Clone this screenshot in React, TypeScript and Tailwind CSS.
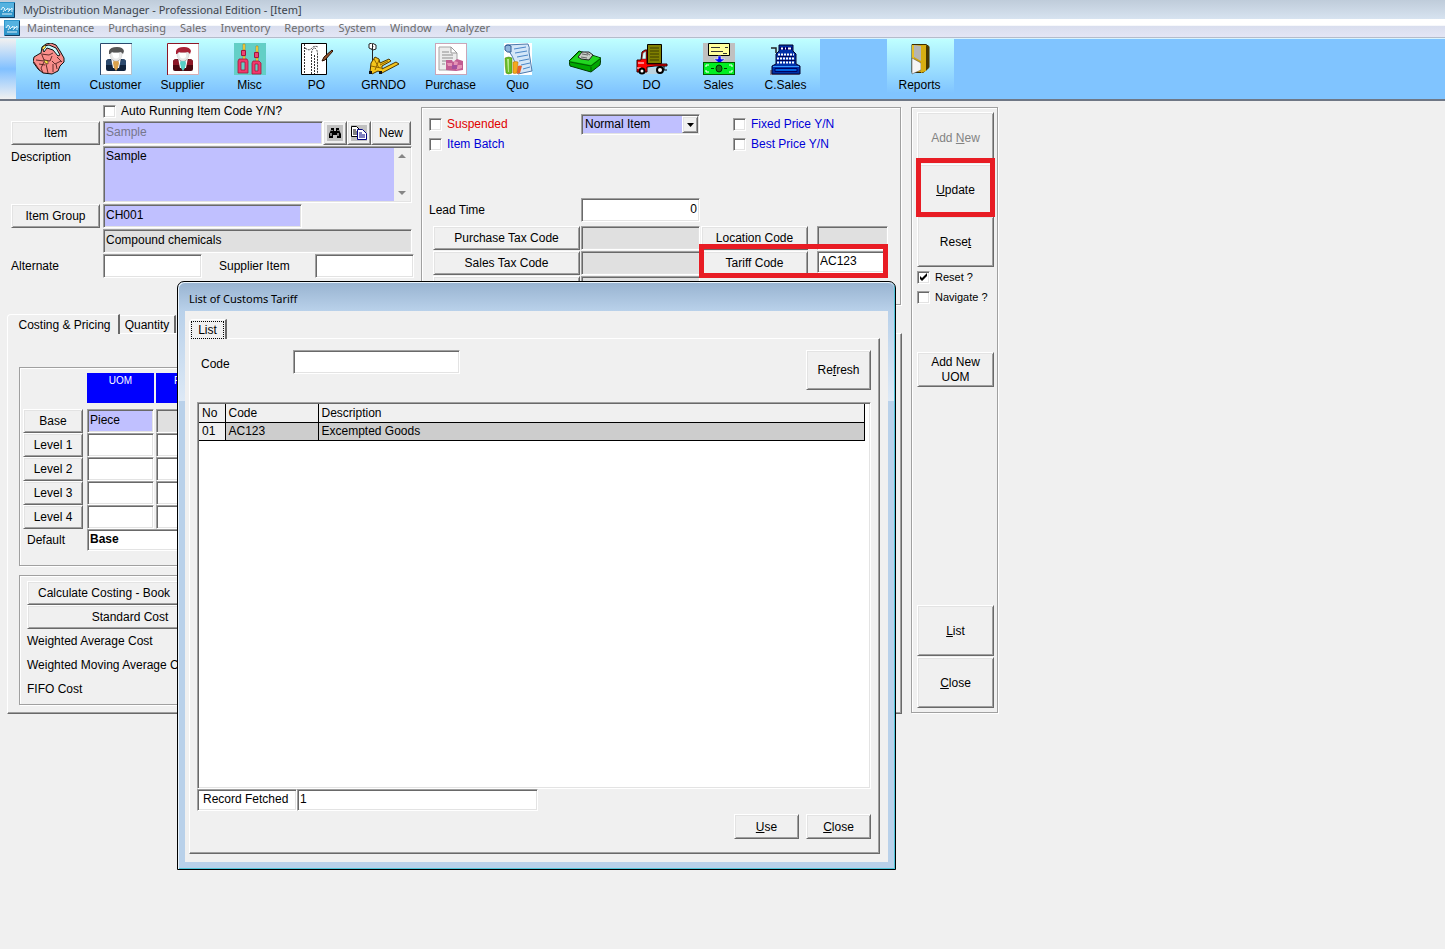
import React, { useState } from "react";

const raised =
  "border border-t-white border-l-white border-r-[#696969] border-b-[#696969] bg-[#f0f0f0] shadow-[inset_1px_1px_0_#e3e3e3,inset_-1px_-1px_0_#a0a0a0]";
const sunken =
  "border border-t-[#a0a0a0] border-l-[#a0a0a0] border-r-white border-b-white shadow-[inset_1px_1px_0_#696969,inset_-1px_-1px_0_#e3e3e3]";
const etched =
  "border border-[#a0a0a0] shadow-[1px_1px_0_#fff,inset_1px_1px_0_#fff]";
const field = `${sunken} min-w-0 px-[2px] pb-[2px] outline-none`;

const AppIcon = () => (
  <svg viewBox="0 0 16 16" className="size-4 shrink-0">
    <rect width="16" height="16" fill="#2f95ca" />
    <rect x="1" y="1" width="14" height="7" fill="#55b2e0" />
    <path d="M2 8l2-3 2 2-2 3M6 9l3-3M8 7h3l-2 3M10 9l3-3v4M3 12h10" stroke="#dff3fc" fill="none" />
    <path d="M15.5 1v14.5H1" stroke="#123a5c" fill="none" />
  </svg>
);

const BagIcon = () => (
  <>
    <path d="M8 10L9 4l4-3 5-1 5 2 4 6 4 7v4l-4 4-2 5-6 3-9-1-5-4-5-7 1-5 5-3z" fill="#f98e8b" stroke="#111" />
    <path d="M10 7l1-4 5-1 7 3 4 7-2 1-5-6-6-2-3 4z" fill="#c9fbff" stroke="#111" />
    <path d="M8 11l8 1 4-2M9 12l2 5 6 1 2-5M3 17l8 1M11 19l-3 6 2 5M19 18l3 3 6-3M13 21l2 9M20 21v8M24 14l5 5M6 21l6 1M23 21l1 5M1 19l6 9" fill="none" stroke="#3a1111" strokeWidth=".8" />
    <path d="M9 5l3-3 1 2-3 3zM11 17l4 1v3l-3-1z" fill="#ffe24a" stroke="#111" strokeWidth=".5" />
  </>
);

const Person = ({
  dark,
  mid,
  tie,
  hair,
}: {
  dark: string;
  mid: string;
  tie: string;
  hair: string;
}) => (
  <>
    <rect width="32" height="32" fill="#fff" />
    <path d="M.5 32V.5H32" fill="none" stroke={mid} />
    <path d="M31.500 1v30.500H1" fill="none" stroke={mid} strokeOpacity=".35" />
    <path d="M6 19q0-3 4-3h12q4 0 4 3v7q0 2-2 2H8q-2 0-2-2z" fill={dark} />
    <path d="M6 19q0-3 4-3l4 6H6zM26 19q0-3-4-3l-4 6h8z" fill={mid} />
    <path d="M11 15l5 6 5-6-2 10h-6z" fill="#fff" />
    <path d="M14 17h4l1 3-1 5-2 3-2-3-1-5z" fill={tie} />
    <path d="M10 9h12v3q-1 6-6 6t-6-6z" fill="#e9e9e9" stroke="#c4c4c4" strokeWidth=".5" />
    <path d="M12 10h7v4q-3 3-6 0z" fill="#fff" />
    <path d="M9 11V8q1-4 8-4 6 0 7 4l-1 3-2-2q-6 1-9 0l-2 2z" fill={hair} />
  </>
);

const CustomerIcon = () => <Person dark="#10233c" mid="#2c4a6e" tie="#d9a14c" hair="#555" />;

const SupplierIcon = () => <Person dark="#4c0810" mid="#8c1727" tie="#56cfc7" hair="#a82136" />;

const MiscIcon = () => (
  <>
    <rect width="32" height="32" fill="#63cfc6" />
    <path d="M9 1h2v6H9zM22 3h2v6h-2zM9 13h2v4H9zM22 15h2v4h-2z" fill="#ffe14a" stroke="#a66b00" strokeWidth=".5" />
    <path d="M7.500 7.500h4v5h-4zM20.500 9.500h4v5h-4z" fill="#ef4474" stroke="#9c1a3e" />
    <path d="M5 16h8l1 2v12H4V18zm2 3v8h4v-8zM19 18h6l2 2v11h-9V20zm2 3v7h3v-7z" fill="#f2386c" fillRule="evenodd" stroke="#9c1a3e" strokeWidth=".8" />
  </>
);

const PoIcon = () => (
  <>
    <path d="M.5.5h25v31H.5z" fill="#fff" stroke="#000" />
    <path d="M3.500 1v30M10.500 31V11q0-5 3-6 3 1 3 6v20M4 5q4 3 6 1 3-4 7-2M13.500 12v19" fill="none" stroke="#333" strokeDasharray="2 1" />
    <path d="M21 18l2-4 8-7 1 1-8 9z" fill="#9a5a32" stroke="#2a0e00" />
  </>
);

const PalletIcon = () => (
  <>
    <path d="M1 1l3-1 4 2v4L5 7 1 5z" fill="#fff" stroke="#222" />
    <path d="M4.500 1v21M5 3L4 6" stroke="#222" fill="none" />
    <path d="M3 20l4-6 4 2 1 4 9-4 2 2-9 5v3l14-7 3 2-17 9-4-2-6 3-2-2z" fill="#f4c51c" stroke="#4e3500" />
    <path d="M6 16l5 9M3 23l10 2M11 17l-4 10M12 22l8-4" stroke="#8f6400" fill="none" />
    <path d="M1 28h3v3H1zM11 28h3v3h-3z" fill="#111" />
  </>
);

const PurchaseIcon = () => (
  <>
    <rect x=".5" y=".5" width="31" height="31" fill="#fff" stroke="#c9a6b8" />
    <path d="M4 4h12l6 6v17H4z" fill="#ececec" stroke="#a5a5a5" />
    <path d="M16 4v6h6z" fill="#fff" stroke="#999" />
    <path d="M7 9h7M7 12h11M7 15h11M7 18h4M7 21h3" stroke="#8d8d8d" />
    <path d="M11 17h6l1 2 4-3 6 2v9l-7 1-10-1z" fill="#c25c92" />
    <path d="M12 20h5v3h-4zM19 18l4 1-1 4h-3zM23 22h4v3l-6 2z" fill="#e594b6" />
    <path d="M17 22h5v4h-5z" fill="#a4509e" />
  </>
);

const QuoIcon = () => (
  <>
    <path d="M2 0h28v32H2z" fill="#fff" />
    <path d="M4 2l22-1q2 3 1 8l3 19-14 3Q14 18 7 8z" fill="#d3e6f8" stroke="#4b79ad" />
    <path d="M3 3q3-2 6 0v6q-4 1-6-2z" fill="#8fb6dd" stroke="#2f5a90" />
    <path d="M12 6l12-2M13 10l12-2M15 14l11-2M17 18l10-2M19 22l9-2M21 26l7-2" stroke="#4b87c7" />
    <path d="M3 15q4-2 7 0v15q-4 2-6 0-1-7-1-15z" fill="#69bd25" stroke="#3f7f13" strokeWidth=".5" />
    <path d="M5 16h2v13H6z" fill="#b5e68a" />
    <path d="M11 19q3-1 5 0l-1 11q-3 1-4 0z" fill="#f4a91c" stroke="#b46c00" strokeWidth=".5" />
    <path d="M16 23q2-1 4 0l-2 7-3 1z" fill="#e7602b" />
  </>
);

const SoIcon = () => (
  <>
    <path d="M0 18L10 8l22 7-1 7-9 7L1 23z" fill="#00a800" stroke="#003800" />
    <path d="M1 18l10-9 20 6-9 7z" fill="#22d622" />
    <path d="M1 19l21 4 9-7M22 24v4" fill="none" stroke="#005a00" />
    <path d="M9 14l4-5h7l4 3-4 5-8-1z" fill="#c8cec8" stroke="#222" />
    <path d="M13 11l6 1M12 14l6 1M16 9l5 3" stroke="#666" />
  </>
);

const TruckIcon = () => (
  <>
    <path d="M9 25h13v6H9z" fill="#bcd3de" />
    <path d="M11.500 1.500h14v19h-14z" fill="#808000" stroke="#000" />
    <path d="M14 5h9M14 8h9M14 11h9M14 14h9M14 17h9" stroke="#3c3c00" />
    <path d="M5 17L6 9l3-2h2v14h20v2H19l-8 1v5H1V17z" fill="#f00" stroke="#300" />
    <path d="M6 16l1-6 3-2v8z" fill="#d8ffff" stroke="#333" strokeWidth=".5" />
    <path d="M2 20h6M1 25h4" stroke="#fff" />
    <circle cx="6" cy="28" r="2.500" fill="#fff" stroke="#000" strokeWidth="2" />
    <circle cx="24" cy="27" r="3" fill="#fff" stroke="#000" strokeWidth="2" />
    <path d="M28 23v4h3" stroke="#000" fill="none" />
  </>
);

const SalesIcon = () => (
  <>
    <rect width="32" height="32" fill="#c0c0c0" />
    <path d="M5.500.5h21v12h-21z" fill="#ffff9c" stroke="#000" />
    <path d="M8 4.500h9M8 8.500h12M20 10.500h4M22 4.500h3" stroke="#333" />
    <path d="M15 13h3v3h4l-5 4h-1l-5-4h4z" fill="#00f" stroke="#fff" strokeWidth=".5" />
    <rect x=".5" y="19.500" width="31" height="12" fill="#0e2" stroke="#005c00" />
    <path d="M3 24v-2h3M26 22h3v2M29 27v2h-3M6 29H3v-2" stroke="#fff" fill="none" />
    <ellipse cx="16" cy="25.500" rx="3" ry="3.500" fill="#177a1c" stroke="#002f00" />
    <path d="M8 25.500h3M21 25.500h3" stroke="#003d00" />
  </>
);

const RegisterIcon = () => (
  <>
    <path d="M1 5h5v5" fill="none" stroke="#222" strokeWidth="1.500" />
    <path d="M0 27h4v5H0zM2 31h27v1H2z" fill="#8a8a9a" />
    <path d="M9 2h14v6l3 3v10l4 2v8H2v-8l4-2V11l3-3z" fill="#0030a8" stroke="#00002c" />
    <path d="M10 4h12v3H10z" fill="#000070" />
    <path d="M11 5.500h2M15 5.500h1M18 5.500h3" stroke="#fff" strokeWidth="2" />
    <path d="M8 11.500h16M7 15.500h18M7 19.500h18" stroke="#fff" strokeWidth="2" strokeDasharray="2 1" />
    <path d="M8 13.500h16M7 17.500h18" stroke="#000050" />
    <path d="M3 23.500h26" stroke="#3a9bff" />
    <path d="M5 25.500h22v3H5z" fill="#0062e0" stroke="#000060" />
  </>
);

const ReportsIcon = () => (
  <>
    <path d="M8 1.500h14l3 2v21l-6 5H8z" fill="#d0a410" stroke="#3c2c00" />
    <path d="M8 2h2v14H8z" fill="#e5be2a" />
    <path d="M10 2l7 1v15l-7-4z" fill="#b4b4b4" />
    <path d="M8 15l9 5v7l-9 4z" fill="#f6f6f6" stroke="#444" strokeWidth=".5" />
    <path d="M17 3l5-1v26l-5 2z" fill="#d8ae12" />
    <path d="M22 2l3 2v20l-3 4z" fill="#4a3800" />
  </>
);

const tools = [
  { label: "Item", icon: BagIcon },
  { label: "Customer", icon: CustomerIcon },
  { label: "Supplier", icon: SupplierIcon },
  { label: "Misc", icon: MiscIcon },
  { label: "PO", icon: PoIcon },
  { label: "GRNDO", icon: PalletIcon },
  { label: "Purchase", icon: PurchaseIcon },
  { label: "Quo", icon: QuoIcon },
  { label: "SO", icon: SoIcon },
  { label: "DO", icon: TruckIcon },
  { label: "Sales", icon: SalesIcon },
  { label: "C.Sales", icon: RegisterIcon },
];

const menus = [
  "Maintenance",
  "Purchasing",
  "Sales",
  "Inventory",
  "Reports",
  "System",
  "Window",
  "Analyzer",
];

const ToolButton = ({ label, icon: Icon }: { label: string; icon: React.FC }) => (
  <button className="flex w-[67px] shrink-0 flex-col items-center bg-linear-to-b from-[#bfffff] to-[#80c4ff] to-90% pt-1 pr-[2px]">
    <svg viewBox="0 0 32 32" className="size-8">
      <Icon />
    </svg>
    <span className="mt-[2px] leading-4">{label}</span>
  </button>
);

const Check = ({
  label,
  className = "",
  defaultChecked = false,
}: {
  label: string;
  className?: string;
  defaultChecked?: boolean;
}) => {
  const [checked, setChecked] = useState(defaultChecked);
  return (
    <label className={`flex h-5 items-center gap-[5px] whitespace-nowrap ${className}`}>
      <span className="relative flex">
        <input
          type="checkbox"
          checked={checked}
          onChange={(e) => setChecked(e.target.checked)}
          className={`${sunken} size-[13px] appearance-none bg-white`}
        />
        {checked && (
          <svg viewBox="0 0 13 13" className="pointer-events-none absolute inset-0">
            <path d="M3 5v3l2 2 5-5V2L5 7z" fill="#000" />
          </svg>
        )}
      </span>
      {label}
    </label>
  );
};

const Btn = ({
  children,
  className = "",
  ...rest
}: React.ButtonHTMLAttributes<HTMLButtonElement>) => (
  <button className={`${raised} shrink-0 whitespace-nowrap ${className}`} {...rest}>
    {children}
  </button>
);

const ItemForm = () => (
  <div className="flex w-[414px] shrink-0 flex-col gap-px pl-[11px]">
    <Check label="Auto Running Item Code Y/N?" className="-mb-px ml-[92px]" />
    <div className="flex">
      <Btn className="mr-[3px] h-6 w-[89px]">Item</Btn>
      <input
        aria-label="Item"
        defaultValue="Sample"
        disabled
        className={`${field} h-6 w-[220px] bg-[#c0c0ff] text-[#77778c]`}
      />
      <Btn aria-label="Find" className="flex h-6 w-6 items-center justify-center">
        <svg viewBox="0 0 16 16" className="size-4">
          <rect width="16" height="16" fill="#c0c0c0" />
          <path d="M4 3h3v3h2V3h3v2l2 4v4h-4v-3H6v3H2V9l2-4z" fill="#000" />
          <path d="M4 8v3M11 8v3M5 5v1M11 5v1" stroke="#fff" />
        </svg>
      </Btn>
      <Btn aria-label="Copy" className="flex h-6 w-6 items-center justify-center">
        <svg viewBox="0 0 16 16" className="size-4">
          <rect width="16" height="16" fill="#c0c0c0" />
          <path d="M.5 1.500h5l3 3v7h-8z" fill="#fff" stroke="#000" />
          <path d="M2 5h3M2 7h5M2 9h4" stroke="#000" />
          <path d="M6.500 4.500h5l4 4v6h-9z" fill="#fff" stroke="#000080" />
          <path d="M8 8h3M8 10h6M8 12h6" stroke="#000080" />
        </svg>
      </Btn>
      <Btn className="h-6 w-10">New</Btn>
    </div>
    <div className="flex">
      <label htmlFor="description" className="w-[92px] pt-[2px]">
        Description
      </label>
      <div className={`${sunken} flex h-[57px] w-[309px] p-px`}>
        <textarea
          id="description"
          defaultValue="Sample"
          className="flex-1 resize-none bg-[#c0c0ff] px-px leading-4 outline-none"
        />
        <div className="flex w-4 flex-col items-center justify-between bg-[#f0f0f0] py-[6px]">
          <svg viewBox="0 0 8 4" className="h-1 w-2">
            <path d="M0 4l4-4 4 4z" fill="#868686" />
          </svg>
          <svg viewBox="0 0 8 4" className="h-1 w-2">
            <path d="M0 0l4 4 4-4z" fill="#868686" />
          </svg>
        </div>
      </div>
    </div>
    <div className="flex">
      <Btn className="mr-[3px] h-6 w-[89px]">Item Group</Btn>
      <input
        aria-label="Item Group"
        defaultValue="CH001"
        className={`${field} h-6 w-[199px] bg-[#c0c0ff]`}
      />
    </div>
    <input
      aria-label="Item Group Name"
      readOnly
      defaultValue="Compound chemicals"
      className={`${field} ml-[92px] h-6 w-[309px] bg-[#e0e0e0]`}
    />
    <div className="flex items-center">
      <label htmlFor="alternate" className="w-[92px]">
        Alternate
      </label>
      <input id="alternate" className={`${field} h-6 w-[99px] bg-white`} />
      <label htmlFor="supplier-item" className="ml-[17px] w-24">
        Supplier Item
      </label>
      <input id="supplier-item" className={`${field} h-6 w-[99px] bg-white`} />
    </div>
  </div>
);

const OptionsPanel = () => {
  const [type, setType] = useState("Normal Item");

  return (
    <div className={`${etched} mt-[6px] mr-px ml-[7px] h-[198px] flex-1 pt-[6px] pl-[7px]`}>
      <div className="flex h-[84px] items-start">
        <div className="w-[152px]">
          <Check label="Suspended" className="text-[#e00000]" />
          <Check label="Item Batch" className="text-[#0000d8]" />
        </div>
        <div className={`${sunken} relative h-[21px] w-[119px] bg-[#c0c0ff]`}>
          <select
            aria-label="Item type"
            value={type}
            onChange={(e) => setType(e.target.value)}
            className="h-full w-full appearance-none pb-px pl-[3px] outline-none"
          >
            <option>Normal Item</option>
          </select>
          <span
            className={`${raised} pointer-events-none absolute top-px right-px bottom-px flex w-4 items-center justify-center`}
          >
            <svg viewBox="0 0 7 4" className="h-1 w-[7px]">
              <path d="M0 0h7L3.500 4z" />
            </svg>
          </span>
        </div>
        <div className="ml-[33px] text-[#0000d8]">
          <Check label="Fixed Price Y/N" />
          <Check label="Best Price Y/N" />
        </div>
      </div>
      <div className="flex items-center">
        <label htmlFor="lead-time" className="w-[152px]">
          Lead Time
        </label>
        <input
          id="lead-time"
          defaultValue="0"
          className={`${field} h-6 w-[119px] bg-white text-right`}
        />
      </div>
      <div className="mt-1 ml-1 grid grid-cols-[147px_119px_107px_71px] gap-x-px gap-y-px">
        <Btn className="h-6">Purchase Tax Code</Btn>
        <input aria-label="Purchase Tax Code" readOnly className={`${field} bg-[#e0e0e0]`} />
        <Btn className="h-6">Location Code</Btn>
        <input aria-label="Location Code" readOnly className={`${field} ml-2 w-[71px] bg-[#e0e0e0]`} />
        <Btn className="h-6">Sales Tax Code</Btn>
        <input aria-label="Sales Tax Code" readOnly className={`${field} bg-[#e0e0e0]`} />
        <div className="relative col-span-2 flex">
          <Btn className="h-6 w-[107px]">Tariff Code</Btn>
          <input
            aria-label="Tariff Code"
            defaultValue="AC123"
            className={`${field} ml-[9px] h-[22px] w-[71px] shrink-0 bg-white`}
          />
          <span className="pointer-events-none absolute -top-[7px] -left-[2px] h-[34px] w-[189px] border-[5px] border-[#e81c24]" />
        </div>
        <Btn className="h-6" />
        <input aria-label="Tax Code" readOnly className={`${field} bg-[#e0e0e0]`} />
      </div>
    </div>
  );
};

const levels = ["Base", "Level 1", "Level 2", "Level 3", "Level 4"];

const PricingTabs = () => (
  <div className="mt-[9px] ml-[7px]">
    <div className="relative flex items-end">
      <button className="-mb-px h-5 w-[113px] rounded-tl-sm border-t border-l border-white border-r-2 border-r-[#696969] bg-[#f0f0f0] pl-[3px]">
        Costing &amp; Pricing
      </button>
      <button className="h-[18px] w-[56px] border-t border-white border-r-2 border-r-[#696969]">
        Quantity
      </button>
    </div>
    <div className="h-[381px] border border-t-white border-l-white border-r-[#696969] border-b-[#696969] px-[11px] pt-[33px] shadow-[inset_-1px_-1px_0_#a0a0a0]">
      <div className={`${etched} h-[199px] pt-[5px] pl-[3px]`}>
        <div className="mb-[6px] ml-16 flex gap-[2px] text-[10px] leading-4 text-white">
          <div className="h-[30px] w-[67px] bg-[#0000ff] text-center">UOM</div>
          <div className="h-[30px] w-[67px] bg-[#0000ff] pl-[18px]">F</div>
        </div>
        {levels.map((level, i) => (
          <div key={level} className="flex">
            <Btn className="mr-1 h-6 w-[60px]">{level}</Btn>
            <input
              aria-label={`${level} UOM`}
              defaultValue={i === 0 ? "Piece" : ""}
              className={`${field} mr-[2px] h-6 w-[67px] ${i === 0 ? "bg-[#c0c0ff]" : "bg-white"}`}
            />
            <input
              aria-label={`${level} factor`}
              className={`${field} h-6 w-[67px] ${i === 0 ? "bg-[#e0e0e0]" : "bg-white"}`}
            />
          </div>
        ))}
        <div className="flex items-center">
          <label htmlFor="default-uom" className="w-16 pl-1">
            Default
          </label>
          <input
            id="default-uom"
            defaultValue="Base"
            className={`${field} h-[22px] w-[136px] bg-white font-bold`}
          />
        </div>
      </div>
      <div className={`${etched} mt-[9px] flex h-[130px] flex-col pt-[5px] pl-[7px]`}>
        <Btn className="h-6 w-[206px] pl-[10px] text-left">Calculate Costing - Book</Btn>
        <Btn className="h-6 w-[206px]">Standard Cost</Btn>
        <span className="leading-6">Weighted Average Cost</span>
        <span className="leading-6">Weighted Moving Average Cost</span>
        <span className="leading-6">FIFO Cost</span>
      </div>
    </div>
  </div>
);

const SidePanel = () => (
  <div className={`${etched} mt-[6px] ml-[9px] flex h-[606px] w-[87px] shrink-0 flex-col py-1 pr-[3px] pl-[5px]`}>
    <Btn disabled className="mb-px h-[51px] text-[#838383]">
      Add <u>N</u>ew
    </Btn>
    <div className="relative mb-px flex">
      <Btn className="h-[51px] w-full">
        <u>U</u>pdate
      </Btn>
      <span className="pointer-events-none absolute -inset-x-px -top-[6px] -bottom-[2px] border-[5px] border-[#e81c24]" />
    </div>
    <Btn className="h-[51px]">
      Rese<u>t</u>
    </Btn>
    <Check label="Reset ?" defaultChecked className="text-[11px]" />
    <Check label="Navigate ?" className="text-[11px]" />
    <Btn className="mt-[45px] h-[35px] leading-[15px]">
      Add New
      <br />
      UOM
    </Btn>
    <Btn className="mt-auto mb-px h-[51px]">
      <u>L</u>ist
    </Btn>
    <Btn className="h-[51px]">
      <u>C</u>lose
    </Btn>
  </div>
);

const TariffDialog = () => {
  const [code, setCode] = useState("");

  return (
    <div
      role="dialog"
      aria-label="List of Customs Tariff"
      className="absolute top-[281px] left-[177px] flex h-[589px] w-[719px] flex-col rounded-t-[7px] border border-black bg-[#b9d1ea] px-[7px] pb-[7px] shadow-[inset_1px_1px_0_#eaf4fc,inset_-1px_-1px_0_#4fc4d8]"
    >
      <div className="-mx-[6px] mt-px h-7 shrink-0 rounded-t-[6px] bg-linear-to-b from-[#99b4d1] to-[#b9d1ea] pl-[10px] font-['Noto_Sans','Open_Sans',sans-serif] text-[11px] leading-8">
        List of Customs Tariff
      </div>
      <div className="-mx-[6px] h-[90px] shrink-0 bg-linear-to-b from-[#b9d1ea] to-[#dde9f6]" />
      <div className="-mt-[90px] flex flex-1 flex-col bg-[#f0f0f0] pt-2 pr-2 pb-2 pl-1">
        <div className="relative flex">
          <button className="-mb-px h-5 w-[38px] rounded-tl-sm border-t border-l border-white border-r-2 border-r-[#696969] bg-[#f0f0f0] p-px">
            <span className="block border border-dotted border-black leading-4">List</span>
          </button>
        </div>
        <div className="flex flex-1 flex-col border border-t-white border-l-white border-r-[#696969] border-b-[#696969] px-2 pt-[11px] pb-[14px] shadow-[inset_-1px_-1px_0_#a0a0a0]">
          <div className="flex h-[52px] items-start">
            <label htmlFor="tariff" className="w-[95px] pl-[3px] leading-7">
              Code
            </label>
            <input
              id="tariff"
              value={code}
              onChange={(e) => setCode(e.target.value)}
              className={`${field} h-6 w-[167px] bg-white`}
            />
            <Btn className="ml-auto h-10 w-[65px]">
              Re<u>f</u>resh
            </Btn>
          </div>
          <div className={`${sunken} -ml-px flex-1 bg-white p-px`}>
            <table className="w-[666px] border-collapse text-left leading-4">
              <thead>
                <tr className="h-[18px] border-b border-black bg-[#f0f0f0]">
                  <th className="w-[26px] border-r border-black pl-[3px] font-normal">No</th>
                  <th className="w-[93px] border-r border-black pl-[3px] font-normal">Code</th>
                  <th className="border-r border-black pl-[3px] font-normal">Description</th>
                </tr>
              </thead>
              <tbody>
                <tr className="h-[18px] border-b border-black bg-[#cdcdcd]">
                  <td className="border-r border-black bg-[#f0f0f0] pl-[3px]">01</td>
                  <td className="border-r border-black pl-[3px]">AC123</td>
                  <td className="border-r border-black pl-[3px]">Excempted Goods</td>
                </tr>
              </tbody>
            </table>
          </div>
          <div className="-ml-px flex">
            <label htmlFor="fetched" className={`${sunken} h-[22px] w-[100px] bg-white pl-[5px] leading-[18px]`}>
              Record Fetched
            </label>
            <input
              id="fetched"
              readOnly
              defaultValue="1"
              className={`${field} h-[22px] w-[241px] bg-white`}
            />
          </div>
          <div className="mt-[3px] flex justify-end gap-[7px]">
            <Btn className="h-[25px] w-[65px]">
              <u>U</u>se
            </Btn>
            <Btn className="h-[25px] w-[65px]">
              <u>C</u>lose
            </Btn>
          </div>
        </div>
      </div>
    </div>
  );
};

const App = () => {
  return (
    <div className="relative min-h-screen overflow-hidden bg-[#f0f0f0] font-['Liberation_Sans',Arial,sans-serif] text-[12px] leading-[18px] text-black">
      <header className="font-['Noto_Sans','Open_Sans',sans-serif] text-[11px]">
        <div className="flex h-[19px] items-center bg-linear-to-b from-[#bfccda] to-[#d7e3f0] text-[#3c444c]">
          <div className="mr-2 -ml-px flex">
            <AppIcon />
          </div>
          <h1 className="leading-4">MyDistribution Manager - Professional Edition - [Item]</h1>
        </div>
        <nav className="flex h-[19px] items-center gap-[14px] border-b border-[#b4bccb] bg-linear-to-b from-white from-35% via-[#d9deee] via-40% to-[#e4e6f5] pl-1 text-[#6d6d6d]">
          <div className="-mr-[7px] flex">
            <AppIcon />
          </div>
          {menus.map((menu) => (
            <button key={menu}>{menu}</button>
          ))}
        </nav>
      </header>

      <div className="flex h-[63px] border-t border-b-2 border-t-[#d8f4ff] border-b-[#6f7785] bg-[#80c4ff]">
        <div className="w-4 bg-linear-to-b from-[#f0f0f0] via-[#80c0ff] to-[#f0f0f0]" />
        {tools.map((tool) => (
          <ToolButton key={tool.label} {...tool} />
        ))}
        <div className="w-[67px]" />
        <ToolButton label="Reports" icon={ReportsIcon} />
      </div>

      <main className="flex max-w-[998px]">
        <div className="min-w-0 flex-1">
          <div className="flex">
            <ItemForm />
            <OptionsPanel />
          </div>
          <PricingTabs />
        </div>
        <SidePanel />
      </main>

      <TariffDialog />
    </div>
  );
};

export default App;
